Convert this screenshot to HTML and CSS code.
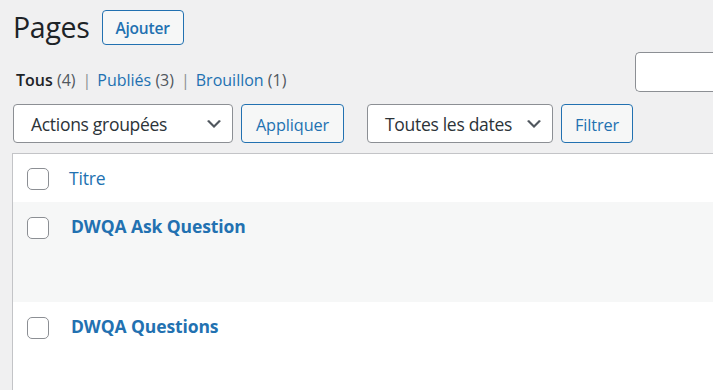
FILE: index.html
```html
<!DOCTYPE html>
<html lang="fr">
<head>
<meta charset="utf-8">
<title>Pages</title>
<link rel="stylesheet" href="styles.css">
</head>
<body>
<div class="wrap">
  <div class="head">
    <h1 class="title">Pages</h1>
    <a class="btn-add" href="#">Ajouter</a>
  </div>
  <div class="subrow">
    <ul class="subsubsub">
      <li><a class="current" href="#">Tous <span class="count">(4)</span></a><span class="sep">|</span></li>
      <li><a href="#">Publiés <span class="count">(3)</span></a><span class="sep">|</span></li>
      <li><a href="#">Brouillon <span class="count">(1)</span></a></li>
    </ul>
    <div class="search"></div>
  </div>
  <div class="tablenav">
    <div class="select sel-bulk"><span>Actions groupées</span><svg class="chev" viewBox="0 0 20 20" width="20" height="20"><path d="M5 6l5 5 5-5 2 1-7 7-7-7 2-1z" fill="#50575e"/></svg></div>
    <button class="btn btn-apply">Appliquer</button>
    <div class="select sel-date"><span>Toutes les dates</span><svg class="chev" viewBox="0 0 20 20" width="20" height="20"><path d="M5 6l5 5 5-5 2 1-7 7-7-7 2-1z" fill="#50575e"/></svg></div>
    <button class="btn btn-filter">Filtrer</button>
  </div>
  <div class="table">
    <div class="row thead">
      <span class="cb"></span>
      <a class="th-title" href="#">Titre</a>
    </div>
    <div class="row item alt">
      <span class="cb"></span>
      <a class="row-title" href="#">DWQA Ask Question</a>
    </div>
    <div class="row item">
      <span class="cb"></span>
      <a class="row-title" href="#">DWQA Questions</a>
    </div>
  </div>
</div>
</body>
</html>
```
FILE: styles.css
```css
html, body {
  margin: 0;
  padding: 0;
  background: #f0f0f1;
  overflow: hidden;
  height: 390px;
}
body {
  font-family: "Open Sans", "Noto Sans", sans-serif;
  color: #3c434a;
}
a { text-decoration: none; color: #2271b1; }

.wrap {
  padding-left: 12px;
  width: 701px;
}

.head {
  display: flex;
  align-items: center;
  padding-top: 10px;
  height: 35px;
}
.title {
  margin: 0 0 0 1px;
  font-size: 28.5px;
  font-weight: 400;
  color: #1d2327;
  line-height: 35px;
  letter-spacing: -0.3px;
}
.btn-add {
  margin-left: 12px;
  box-sizing: border-box;
  height: 35px;
  width: 82px;
  border: 1px solid #2271b1;
  border-radius: 4px;
  background: #f6f7f7;
  font-weight: 600;
  font-size: 15.5px;
  display: flex;
  align-items: center;
  justify-content: center;
  letter-spacing: -0.2px;
}

.subrow {
  display: flex;
  align-items: flex-start;
  justify-content: space-between;
  margin-top: 7px;
  height: 40px;
}
.subsubsub {
  list-style: none;
  margin: 16px 0 0 4px;
  padding: 0;
  display: flex;
  font-size: 16px;
  line-height: 24px;
}
.subsubsub .current { color: #1d2327; font-weight: 600; }
.subsubsub .count { color: #50575e; font-weight: 400; }
.sep { color: #8c8f94; margin: 0 6px 0 7px; }
.search {
  box-sizing: border-box;
  width: 90px;
  height: 40px;
  margin-right: -12px;
  background: #fff;
  border: 1px solid #8c8f94;
  border-right: none;
  border-radius: 5px 0 0 5px;
}

.tablenav {
  display: flex;
  align-items: center;
  margin-top: 12px;
  height: 39px;
  padding-left: 1px;
}
.select {
  box-sizing: border-box;
  height: 39px;
  display: flex;
  align-items: center;
  justify-content: space-between;
  background: #fff;
  border: 1px solid #8c8f94;
  border-radius: 4px;
  padding: 0 8px 0 17px;
  font-size: 17.5px;
  color: #2c3338;
  letter-spacing: -0.3px;
}
.sel-bulk { width: 220px; }
.sel-date { width: 186px; margin-left: 23px; }
.chev { display: block; margin-top: 1px; }
.btn {
  box-sizing: border-box;
  height: 39px;
  margin-left: 8px;
  padding: 3px 0 0;
  border: 1px solid #2271b1;
  border-radius: 4px;
  background: #f6f7f7;
  color: #2271b1;
  font-family: inherit;
  font-size: 16.25px;
  letter-spacing: -0.1px;
}
.btn-apply { width: 103px; }
.btn-filter { width: 72px; }

.table {
  margin-top: 10px;
  margin-right: -12px;
  background: #fff;
  border-top: 1px solid #c3c4c7;
  border-left: 1px solid #c3c4c7;
  height: 237px;
}
.row {
  display: flex;
  align-items: flex-start;
  box-sizing: border-box;
  padding-left: 14px;
}
.thead { height: 48px; padding-top: 14px; }
.item { height: 100px; padding-top: 15px; }
.alt { background: #f6f7f7; }
.cb {
  box-sizing: border-box;
  width: 22px;
  height: 22px;
  border: 1px solid #8c8f94;
  border-radius: 5px;
  background: #fff;
  flex: none;
}
.th-title {
  margin-left: 20px;
  font-size: 17.5px;
  line-height: 20px;
  letter-spacing: -0.2px;
}
.row-title {
  margin-left: 22px;
  font-size: 17.5px;
  font-weight: 700;
  line-height: 18px;
  letter-spacing: -0.1px;
}
```
